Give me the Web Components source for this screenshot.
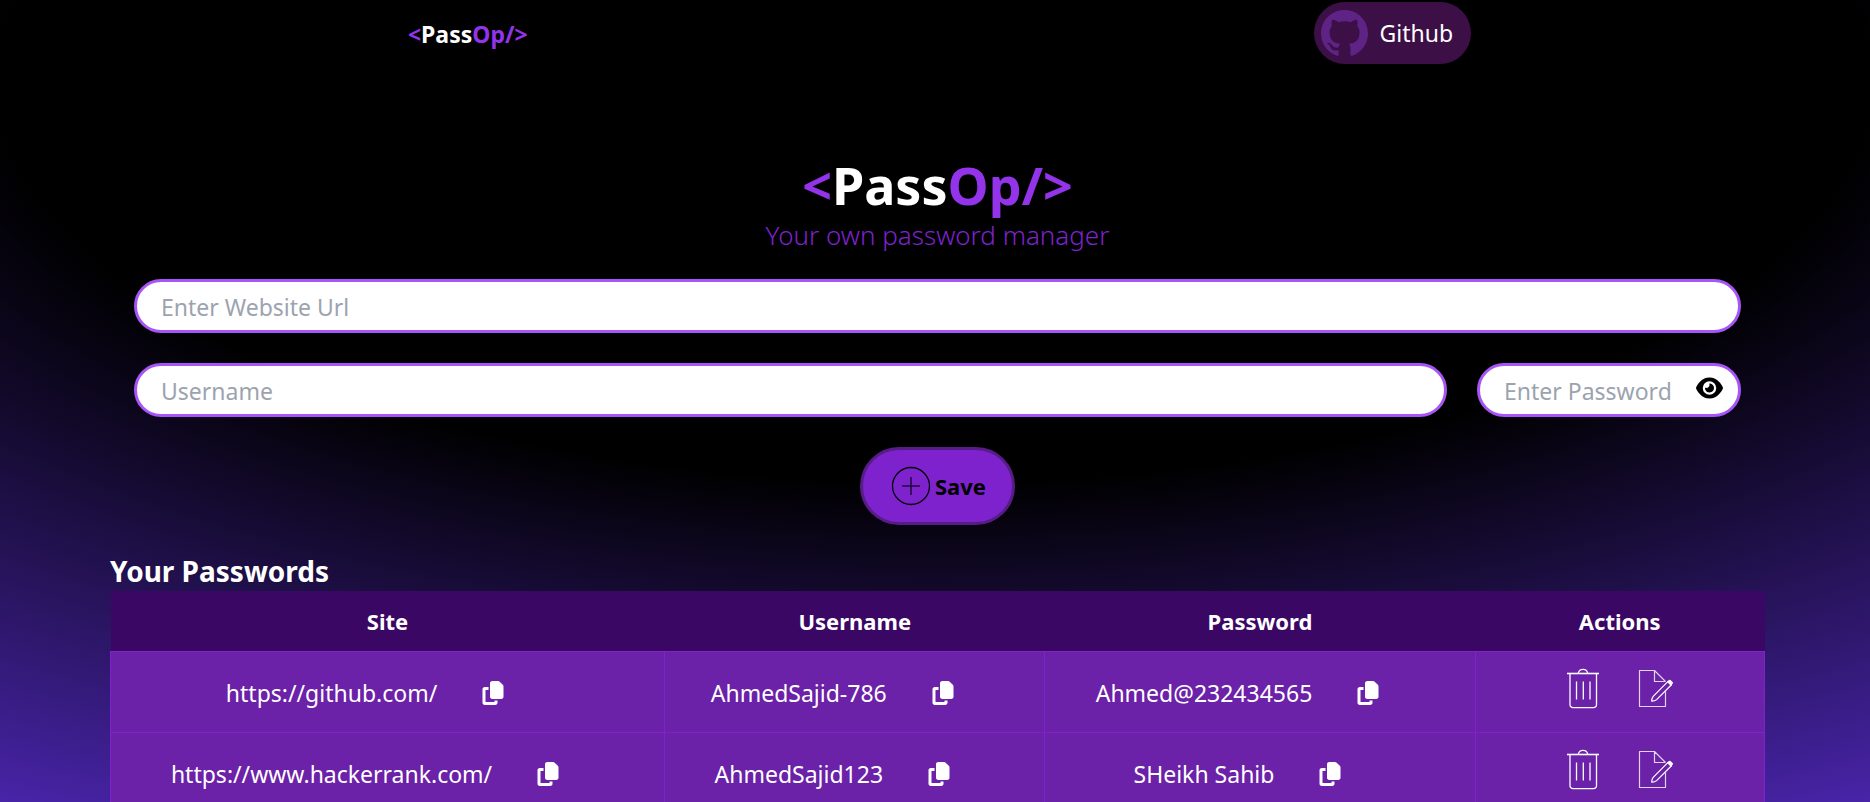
<!DOCTYPE html>
<html lang="en">
<head>
<meta charset="utf-8">
<meta name="viewport" content="width=device-width, initial-scale=1">
<title>PassOp - Your own password manager</title>
<style>
  html { scrollbar-width: none; }
  body {
    margin: 0;
    min-height: 100vh;
    background: #000 radial-gradient(125% 125% at 50% 10%, #000 40%, #63e 100%) fixed;
    color: #fff;
    font: 23px/36px "Noto Sans", "Open Sans", sans-serif;
  }
</style>
</head>
<body>
<pass-page>
  <site-nav slot="nav" href="https://github.com/">Github</site-nav>
  <page-hero slot="hero">Your own password manager</page-hero>
  <password-form slot="form"></password-form>
  <password-table slot="list">Your Passwords</password-table>
</pass-page>

<script>
const define = (name, markup, setup) => {
  const template = document.createElement('template');
  template.innerHTML = `<style>*, ::before { box-sizing: border-box; }</style>${markup}`;
  customElements.define(name, class extends HTMLElement {
    connectedCallback() {
      if (this.shadowRoot) return;
      this.attachShadow({ mode: 'open' }).append(template.content.cloneNode(true));
      if (setup) setup(this, this.shadowRoot);
    }
  });
};

const icons = {
  github: ['0 0 16 16', '<path fill="currentColor" d="M8 0C3.58 0 0 3.58 0 8c0 3.54 2.29 6.53 5.47 7.59.4.07.55-.17.55-.38 0-.19-.01-.82-.01-1.49-2.01.37-2.53-.49-2.69-.94-.09-.23-.48-.94-.82-1.13-.28-.15-.68-.52-.01-.53.63-.01 1.08.58 1.23.82.72 1.21 1.87.87 2.33.66.07-.52.28-.87.51-1.07-1.78-.2-3.64-.89-3.64-3.95 0-.87.31-1.59.82-2.15-.08-.2-.36-1.02.08-2.12 0 0 .67-.21 2.2.82.64-.18 1.32-.27 2-.27.68 0 1.36.09 2 .27 1.53-1.04 2.2-.82 2.2-.82.44 1.1.16 1.92.08 2.12.51.56.82 1.27.82 2.15 0 3.07-1.87 3.75-3.65 3.95.29.25.54.73.54 1.48 0 1.07-.01 1.93-.01 2.2 0 .21.15.46.55.38A8.01 8.01 0 0 0 16 8c0-4.42-3.58-8-8-8z"/>'],
  eye: ['0 0 576 512', '<path fill="currentColor" d="M288 32c-80.8 0-145.5 36.8-192.6 80.6C48.6 156 17.3 208 2.5 243.7c-3.3 7.9-3.3 16.7 0 24.6C17.3 304 48.6 356 95.4 399.4C142.5 443.2 207.2 480 288 480s145.5-36.8 192.6-80.6c46.8-43.5 78.1-95.4 93-131.1c3.3-7.9 3.3-16.7 0-24.6c-14.9-35.7-46.2-87.7-93-131.1C433.5 68.8 368.8 32 288 32zM144 256a144 144 0 1 1 288 0 144 144 0 1 1 -288 0zm144-64c0 35.3-28.7 64-64 64c-7.1 0-13.9-1.2-20.3-3.3c-5.5-1.8-11.9 1.6-11.7 7.4c.3 6.9 1.3 13.8 3.2 20.7c13.7 51.2 66.4 81.6 117.6 67.9s81.6-66.4 67.9-117.6c-11.1-41.5-47.8-69.4-88.6-71.1c-5.8-.2-9.2 6.1-7.4 11.7c2.1 6.4 3.3 13.2 3.3 20.3z"/>'],
  copy: ['0 0 448 512', '<path fill="currentColor" d="M208 0H332.1c12.7 0 24.9 5.1 33.9 14.1l67.9 67.9c9 9 14.1 21.2 14.1 33.9V336c0 26.5-21.5 48-48 48H208c-26.5 0-48-21.5-48-48V48c0-26.5 21.5-48 48-48zM48 128h80v64H64V448H256V416h64v48c0 26.5-21.5 48-48 48H48c-26.5 0-48-21.5-48-48V176c0-26.5 21.5-48 48-48z"/>'],
  plus: ['0 0 40 40', '<g fill="none" stroke="currentColor"><circle cx="20" cy="20" r="18.5" stroke-width="1.3"/><path d="M20 11v18M11 20h18" stroke-width="1.5" opacity=".75"/></g>'],
  trash: ['0 0 42 42', '<g fill="none" stroke="currentColor" stroke-width="1.3"><path d="M5 6.5h32" stroke-width="1.6"/><path d="M16.3 6.3a4.8 4.8 0 0 1 9.4 0M8 6.5v31.200a3 3 0 0 0 3 3h20.500a3 3 0 0 0 3-3V6.500"/><path d="M14.500 14.500v18M21.300 14.500v18M28 14.500v18"/></g>'],
  edit: ['0 0 42 42', '<g fill="none" stroke="currentColor" stroke-width="1.2" stroke-linejoin="round"><path d="M30.500 24.500V39.500H4.500V3.500H19.500L30.500 14.500M19.500 3.500V14.500H30.500" opacity=".8"/><path d="M32.800 14.600L18.200 29.300Q16.500 31.500 16.800 34.200Q19.600 34.300 21.600 32.600L36.200 18Z"/><path fill="currentColor" d="M32.800 14.600L35 13.300L37.400 15.700L36.200 18Z"/></g>']
};

/* <svg-icon name="…" width="…" height="…"> */
define('svg-icon', `
  <style>
    :host { display: inline-flex; flex: none; }
    svg { display: block; }
  </style>
  <svg aria-hidden="true"></svg>`,
  (host, root) => {
    const [box, shape] = icons[host.getAttribute('name')];
    const svg = root.querySelector('svg');
    svg.setAttribute('viewBox', box);
    svg.setAttribute('width', host.getAttribute('width'));
    svg.setAttribute('height', host.getAttribute('height') || host.getAttribute('width'));
    svg.innerHTML = shape;
  });

define('brand-logo', `
  <style>
    :host { display: inline-block; font-weight: 700; color: #fff; white-space: nowrap; }
    b { font-weight: inherit; color: #9333ea; }
  </style>
  <b>&lt;</b>Pass<b>Op/&gt;</b>`);

define('site-nav', `
  <style>
    :host { display: block; }
    nav {
      display: flex; align-items: center; justify-content: space-around;
      min-height: 66px; padding: 0 6px 0 10px;
    }
    brand-logo { font-size: 23px; padding-top: 2px; }
    a {
      display: flex; align-items: center; gap: 12px; height: 62px;
      padding: 0 18px 0 7px; border-radius: 31px;
      background: #3d0f47; color: #fff; text-decoration: none;
    }
    svg-icon { color: #5e2384; }
  </style>
  <nav>
    <brand-logo></brand-logo>
    <a><svg-icon name="github" width="47"></svg-icon><slot></slot></a>
  </nav>`,
  (host, root) => root.querySelector('a').href = host.getAttribute('href'));

define('page-hero', `
  <style>
    :host { display: block; text-align: center; }
    h1 { margin: 0; font-size: 52px; line-height: 60px; }
    p { margin: 0; font-size: 26px; line-height: 40px; font-weight: 350; color: #7e22ce; }
  </style>
  <h1><brand-logo></brand-logo></h1>
  <p><slot></slot></p>`);

/* Rounded text box; the slot holds a control shown at its right end. */
define('text-field', `
  <style>
    :host { display: block; position: relative; }
    input {
      display: block; width: 100%; height: 54px; padding: 2px 24px 0;
      border: 3px solid #a855f7; border-radius: 27px; outline: 0;
      background: #fff; color: #000; font: inherit;
    }
    input::placeholder { color: #9ca3af; opacity: 1; }
    ::slotted(*) { position: absolute; right: 18px; top: 13px; }
  </style>
  <input><slot></slot>`,
  (host, root) => {
    const input = root.querySelector('input');
    input.type = host.getAttribute('type') || 'text';
    input.placeholder = host.getAttribute('placeholder');
    input.setAttribute('aria-label', input.placeholder);
  });

define('icon-button', `
  <style>
    :host { display: inline-flex; flex: none; }
    button {
      display: flex; margin: 0; padding: 0; border: 0;
      background: none; color: inherit; cursor: pointer;
    }
  </style>
  <button type="button"><slot></slot></button>`,
  (host, root) => root.querySelector('button').setAttribute('aria-label', host.getAttribute('label')));

define('password-form', `
  <style>
    :host { display: block; }
    form { display: grid; gap: 30px; padding: 24px; }
    .row { display: flex; gap: 30px; }
    .user { flex: 1; }
    .pass { flex: 0 0 264px; }
    icon-button { color: #000; }
    .save {
      display: flex; align-items: center; justify-self: center; gap: 4px;
      height: 78px; padding: 0 26px 0 28px;
      border: 3px solid #581c87; border-radius: 39px;
      background: #7e22ce; color: #000; font: inherit; font-size: 22px; font-weight: 700;
    }
  </style>
  <form>
    <text-field placeholder="Enter Website Url"></text-field>
    <div class="row">
      <text-field class="user" placeholder="Username"></text-field>
      <text-field class="pass" type="password" placeholder="Enter Password">
        <icon-button label="Show password"><svg-icon name="eye" width="27" height="24"></svg-icon></icon-button>
      </text-field>
    </div>
    <button class="save" type="button"><svg-icon name="plus" width="40"></svg-icon><span>Save</span></button>
  </form>`);

const entries = [
  ['https://github.com/', 'AhmedSajid-786', 'Ahmed@232434565'],
  ['https://www.hackerrank.com/', 'AhmedSajid123', 'SHeikh Sahib']
];

define('password-table', `
  <style>
    :host { display: block; }
    h2 { margin: 0; padding-top: 2px; font-size: 28px; line-height: 40px; }
    table { width: 100%; border-collapse: collapse; table-layout: fixed; }
    .site { width: 33.5%; } .name { width: 23%; } .word { width: 26%; }
    thead { background: #3b0764; }
    th { height: 60px; padding: 0; font-size: 22px; font-weight: 700; }
    tbody { background: #6b21a8; }
    td { height: 81px; padding: 0; border: 1px solid #7e22ce; }
    td a { color: inherit; text-decoration: none; }
    .cell { display: flex; align-items: center; justify-content: center; padding-top: 3px; }
    .copy { padding: 0 45px; }
    .actions { display: flex; justify-content: center; gap: 31px; padding-bottom: 8px; }
  </style>
  <h2><slot></slot></h2>
  <table>
    <colgroup><col class="site"><col class="name"><col class="word"><col></colgroup>
    <thead><tr><th>Site</th><th>Username</th><th>Password</th><th>Actions</th></tr></thead>
    <tbody></tbody>
  </table>`,
  (host, root) => {
    const cell = (content, label) => `<td><div class="cell">${content}
      <icon-button class="copy" label="Copy ${label}"><svg-icon name="copy" width="22" height="24"></svg-icon></icon-button></div></td>`;
    root.querySelector('tbody').innerHTML = entries.map(([site, name, word]) => `<tr>
      ${cell(`<a href="${site}">${site}</a>`, 'site')}
      ${cell(`<span>${name}</span>`, 'username')}
      ${cell(`<span>${word}</span>`, 'password')}
      <td><div class="actions">
        <icon-button label="Delete"><svg-icon name="trash" width="42"></svg-icon></icon-button>
        <icon-button label="Edit"><svg-icon name="edit" width="42"></svg-icon></icon-button>
      </div></td></tr>`).join('');
  });

define('pass-page', `
  <style>
    :host { display: block; padding-left: 5px; }
    main { max-width: 1655px; margin: 0 auto; padding-top: 89px; }
  </style>
  <slot name="nav"></slot>
  <main>
    <slot name="hero"></slot>
    <slot name="form"></slot>
    <slot name="list"></slot>
  </main>`);
</script>
</body>
</html>
